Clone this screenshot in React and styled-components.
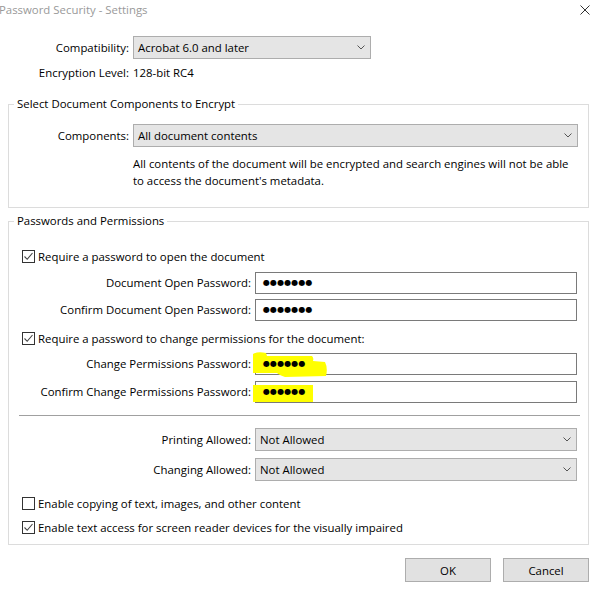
import React from 'react';
import styled, { createGlobalStyle } from 'styled-components';

const Global = createGlobalStyle`
  html, body { margin: 0; padding: 0; background: #fff; }
  body { font-family: "Open Sans", "Noto Sans", sans-serif; font-size: 11.4px; color: #000; }
  * { box-sizing: border-box; }
`;

const Dialog = styled.div`
  width: 597px;
  height: 594px;
  background: #fff;
  display: flex;
  flex-direction: column;
  overflow: hidden;
`;

const TitleBar = styled.div`
  height: 20px;
  display: flex;
  align-items: center;
  justify-content: space-between;
  padding-right: 7px;
`;

const Title = styled.div`
  color: #999;
  line-height: 20px;
  margin-left: -1px;
`;

const TopForm = styled.div`
  display: grid;
  grid-template-columns: 129px 238px;
  column-gap: 4px;
  row-gap: 6px;
  margin-top: 16px;
  align-items: center;
`;

const Label = styled.div`
  text-align: right;
  white-space: nowrap;
  line-height: 16px;
`;

const Value = styled.div`
  line-height: 16px;
  white-space: nowrap;
`;

const SelectBox = styled.div`
  height: 23px;
  display: flex;
  align-items: center;
  justify-content: space-between;
  background: #e5e5e5;
  border: 1px solid #adadad;
  padding: 0 5px 0 4px;
  white-space: nowrap;
`;

const Group = styled.fieldset`
  margin: ${(p) => p.$mt}px 8px 0 8px;
  padding: 0 8px ${(p) => p.$pb}px 5px;
  border: 1px solid #dcdcdc;
  min-width: 0;
`;

const Legend = styled.legend`
  padding: 0 3px;
  line-height: 16px;
`;

const ComponentsGrid = styled.div`
  display: grid;
  grid-template-columns: 115px 445px;
  column-gap: 4px;
  row-gap: 8px;
  margin-top: 12px;
  align-items: center;
`;

const Description = styled.div`
  grid-column: 2;
  line-height: 17px;
  white-space: nowrap;
`;

const CheckRow = styled.label`
  display: flex;
  align-items: center;
  gap: 3px;
  height: 16px;
  padding-left: 8px;
  margin-top: ${(p) => p.$mt}px;
  white-space: nowrap;
`;

const Box = styled.span`
  width: 13px;
  height: 13px;
  border: 1px solid #333;
  background: #fff;
  display: inline-flex;
  align-items: center;
  justify-content: center;
  flex: none;
`;

const FieldGrid = styled.div`
  display: grid;
  grid-template-columns: 237px 322px;
  column-gap: 4px;
  row-gap: ${(p) => p.$gap}px;
  margin-top: ${(p) => p.$mt}px;
  align-items: center;
`;

const TextField = styled.div`
  position: relative;
  height: 22px;
  border: 1px solid #7a7a7a;
  background: #fff;
  display: flex;
  align-items: center;
  padding-left: 7px;
`;

const Dots = styled.span`
  position: relative;
  z-index: 1;
  font-family: "DejaVu Sans", sans-serif;
  font-size: 8px;
  letter-spacing: 0.1px;
  line-height: 1;
  color: #000;
`;

const HighlightSvg = styled.svg`
  position: absolute;
  left: -1px;
  top: -1px;
  overflow: visible;
  pointer-events: none;
  z-index: 0;
`;

const Separator = styled.div`
  height: 1px;
  background: #a0a0a0;
  margin: 12px 0 0 5px;
`;

const ButtonRow = styled.div`
  display: flex;
  justify-content: flex-end;
  gap: 12px;
  margin-top: 13px;
  padding-right: 8px;
`;

const Button = styled.button`
  width: 86px;
  height: 24px;
  background: #e1e1e1;
  border: 1px solid #adadad;
  font-family: inherit;
  font-size: 11.4px;
  color: #000;
  padding: 0;
`;

const Chevron = () => (
  <svg width="8" height="5" viewBox="0 0 8 5">
    <path d="M0.5 0.5 L4 4 L7.5 0.5" fill="none" stroke="#555" strokeWidth="1" />
  </svg>
);

const Select = ({ children }) => (
  <SelectBox>
    <span>{children}</span>
    <Chevron />
  </SelectBox>
);

const Check = ({ checked, children, mt }) => (
  <CheckRow $mt={mt}>
    <Box>
      {checked && (
        <svg width="11" height="11" viewBox="0 0 11 11">
          <path d="M1.5 5.5 L4.2 8.3 L9.5 2" fill="none" stroke="#444" strokeWidth="1.1" />
        </svg>
      )}
    </Box>
    <span>{children}</span>
  </CheckRow>
);

const Password = ({ count, highlight }) => (
  <TextField>
    {highlight === 1 && (
      <HighlightSvg width="80" height="30">
        <path
          d="M-2 1 Q3 -2 11 0 L12 3 L57 3 Q59 5 58 8 L70 9 Q73 15 71 23 L30 24 Q24 22 22 20 L-2 20 Z"
          fill="#ffff00"
        />
      </HighlightSvg>
    )}
    {highlight === 2 && (
      <HighlightSvg width="80" height="30">
        <path d="M-2 4 L58 4 L58 21 L-2 21 Z" fill="#ffff00" />
      </HighlightSvg>
    )}
    <Dots>{'●'.repeat(count)}</Dots>
  </TextField>
);

export default function App() {
  return (
    <>
      <Global />
      <Dialog>
        <TitleBar>
          <Title>Password Security - Settings</Title>
          <svg width="10" height="10" viewBox="0 0 10 10">
            <path d="M0.5 0.5 L9.5 9.5 M9.5 0.5 L0.5 9.5" stroke="#333" strokeWidth="1" />
          </svg>
        </TitleBar>

        <TopForm>
          <Label>Compatibility:</Label>
          <Select>Acrobat 6.0 and later</Select>
          <Label>Encryption Level:</Label>
          <Value>128-bit RC4</Value>
        </TopForm>

        <Group $mt={15} $pb={18}>
          <Legend>Select Document Components to Encrypt</Legend>
          <ComponentsGrid>
            <Label>Components:</Label>
            <Select>All document contents</Select>
            <Description>
              All contents of the document will be encrypted and search engines will not be able
              <br />
              to access the document's metadata.
            </Description>
          </ComponentsGrid>
        </Group>

        <Group $mt={5} $pb={9}>
          <Legend>Passwords and Permissions</Legend>
          <Check checked mt={19}>Require a password to open the document</Check>
          <FieldGrid $mt={8} $gap={5}>
            <Label>Document Open Password:</Label>
            <Password count={7} />
            <Label>Confirm Document Open Password:</Label>
            <Password count={7} />
          </FieldGrid>
          <Check checked mt={9}>Require a password to change permissions for the document:</Check>
          <FieldGrid $mt={7} $gap={6}>
            <Label>Change Permissions Password:</Label>
            <Password count={6} highlight={1} />
            <Label>Confirm Change Permissions Password:</Label>
            <Password count={6} highlight={2} />
          </FieldGrid>
          <Separator />
          <FieldGrid $mt={12} $gap={7}>
            <Label>Printing Allowed:</Label>
            <Select>Not Allowed</Select>
            <Label>Changing Allowed:</Label>
            <Select>Not Allowed</Select>
          </FieldGrid>
          <Check mt={14}>Enable copying of text, images, and other content</Check>
          <Check checked mt={8}>Enable text access for screen reader devices for the visually impaired</Check>
        </Group>

        <ButtonRow>
          <Button>OK</Button>
          <Button>Cancel</Button>
        </ButtonRow>
      </Dialog>
    </>
  );
}
